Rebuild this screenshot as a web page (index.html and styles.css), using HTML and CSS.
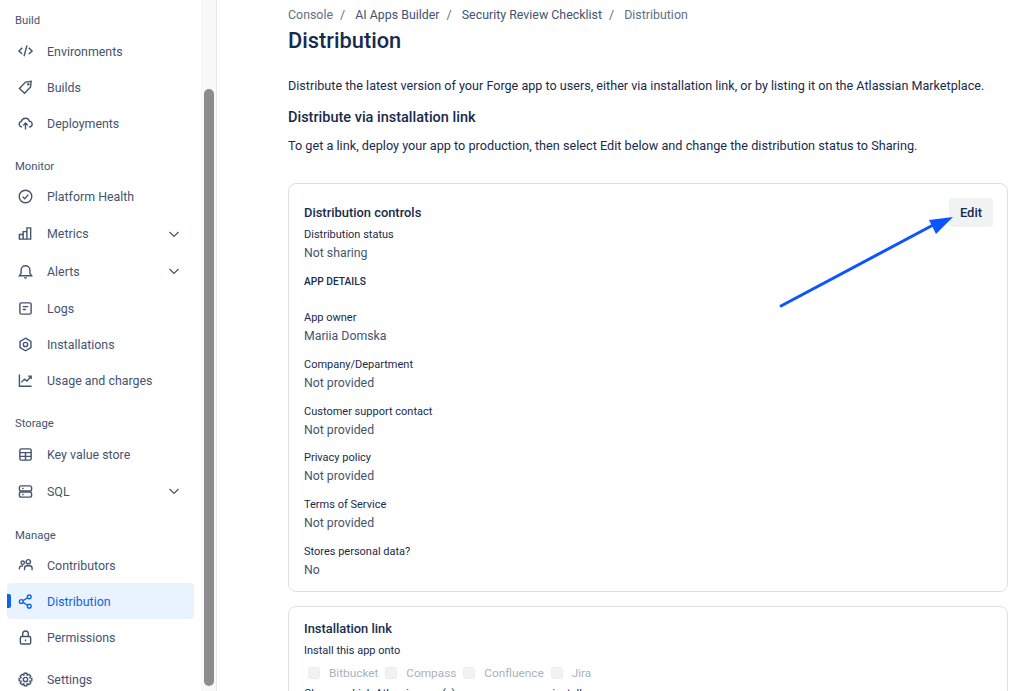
FILE: index.html
```html
<!DOCTYPE html>
<html lang="en">
<head>
    <meta charset="UTF-8">
    <meta name="viewport" content="width=device-width, initial-scale=1.0">
    <title>Distribution</title>
    <link rel="stylesheet" href="styles.css">
</head>
<body>
    <div class="page">

        <!-- Sidebar -->
        <aside class="sidebar">
            <nav class="side-nav">
                <h4 class="nav-label label-build">Build</h4>
                <a class="nav-item">
                    <svg class="nav-icon" viewBox="0 0 16 16"><path d="M4.5 4 1 7.6l3.5 3M11.5 4 15 7.6l-3.5 3M9.6 1.5 6.4 13"/></svg>
                    <span>Environments</span>
                </a>
                <a class="nav-item">
                    <svg class="nav-icon" viewBox="0 0 16 16"><path d="M1.5 9 8 2.2l6-.7-.6 6L7 14.2z"/><circle cx="11" cy="4.6" r=".6"/></svg>
                    <span>Builds</span>
                </a>
                <a class="nav-item">
                    <svg class="nav-icon" viewBox="0 0 16 16"><path d="M4.5 11.6H4A3 3 0 0 1 3.6 5.7 4.5 4.5 0 0 1 12.2 5.6 3 3 0 0 1 12 11.6h-.5M8 14.5V7.5M5.5 10 8 7.5l2.5 2.5"/></svg>
                    <span>Deployments</span>
                </a>

                <h4 class="nav-label label-monitor">Monitor</h4>
                <a class="nav-item item-37">
                    <svg class="nav-icon" viewBox="0 0 16 16"><circle cx="8" cy="8" r="6.7"/><path d="m5 8.2 2.2 2.2L11 6"/></svg>
                    <span>Platform Health</span>
                </a>
                <a class="nav-item item-37">
                    <svg class="nav-icon" viewBox="0 0 16 16"><path d="M1.500 9h4v5h-4zM5.500 6h4v8h-4zM9.500 2h4v12h-4z"/></svg>
                    <span>Metrics</span>
                    <svg class="chevron" viewBox="0 0 12 12"><path d="m1.500 4 4.500 4.500L10.500 4"/></svg>
                </a>
                <a class="nav-item item-38">
                    <svg class="nav-icon" viewBox="0 0 16 16"><path d="M1.500 12.500h13l-1.800-2.500V6.500a4.700 4.700 0 0 0-9.400 0V10zM6.500 14.800h3"/></svg>
                    <span>Alerts</span>
                    <svg class="chevron" viewBox="0 0 12 12"><path d="m1.500 4 4.500 4.500L10.500 4"/></svg>
                </a>
                <a class="nav-item">
                    <svg class="nav-icon" viewBox="0 0 16 16"><rect x="2" y="2" width="12" height="12" rx="1.500"/><path d="M5 6h6M5 9h3.500"/></svg>
                    <span>Logs</span>
                </a>
                <a class="nav-item">
                    <svg class="nav-icon" viewBox="0 0 16 16"><path d="m8 1.300 5.800 3.300v6.800L8 14.700l-5.800-3.300V4.600z"/><circle cx="8" cy="8" r="2.300"/></svg>
                    <span>Installations</span>
                </a>
                <a class="nav-item">
                    <svg class="nav-icon" viewBox="0 0 16 16"><path d="M1.500 1.500v12.700h13M3.500 10l3.500-3.500 2.500 2L14 3.500M10.800 3.300H14v3"/></svg>
                    <span>Usage and charges</span>
                </a>

                <h4 class="nav-label label-storage">Storage</h4>
                <a class="nav-item item-37">
                    <svg class="nav-icon" viewBox="0 0 16 16"><rect x="2" y="2" width="12" height="12" rx="1.500"/><path d="M2 6h12M2 10h12M8 6v8"/></svg>
                    <span>Key value store</span>
                </a>
                <a class="nav-item">
                    <svg class="nav-icon" viewBox="0 0 16 16"><rect x="1.500" y="2" width="13" height="5.500" rx="2"/><rect x="1.500" y="8.500" width="13" height="5.500" rx="2"/><path d="M4.500 4.800h1.500M4.500 11.200h1.500"/></svg>
                    <span>SQL</span>
                    <svg class="chevron" viewBox="0 0 12 12"><path d="m1.500 4 4.500 4.500L10.500 4"/></svg>
                </a>

                <h4 class="nav-label label-manage">Manage</h4>
                <a class="nav-item">
                    <svg class="nav-icon" viewBox="0 0 16 16"><circle cx="5" cy="5" r="1.800"/><circle cx="11" cy="4" r="2.300"/><path d="M1.500 12v-1.500A2.500 2.500 0 0 1 4 8.500h1.500M7 13v-2.500A2.500 2.500 0 0 1 9.500 8.200h3A2.500 2.500 0 0 1 15 10.500V13"/></svg>
                    <span>Contributors</span>
                </a>
                <a class="nav-item is-active">
                    <svg class="nav-icon" viewBox="0 0 16 16"><circle cx="3.500" cy="8" r="2"/><circle cx="12" cy="3" r="2"/><circle cx="12" cy="13" r="2"/><path d="m5.300 7 5-3M5.300 9l5 3"/></svg>
                    <span>Distribution</span>
                </a>
                <a class="nav-item">
                    <svg class="nav-icon" viewBox="0 0 16 16"><rect x="2.500" y="7" width="11" height="8" rx="1.500"/><path d="M5 7V4a3 3 0 0 1 6 0v3M8 10v2"/></svg>
                    <span>Permissions</span>
                </a>
                <a class="nav-item item-settings">
                    <svg class="nav-icon" viewBox="0 0 16 16"><circle cx="8" cy="8" r="2.300"/><path d="M6.600 1.300h2.800l.4 2 1.800-.9 2 2-1 1.700 2.100.5v2.800l-2.100.5 1 1.700-2 2-1.800-.9-.4 2H6.600l-.4-2-1.800.9-2-2 1-1.700-2.100-.5V6.600l2.100-.5-1-1.700 2-2 1.800.9z"/></svg>
                    <span>Settings</span>
                </a>
            </nav>
            <div class="scroll-track">
                <div class="scroll-thumb"></div>
            </div>
        </aside>

        <!-- Main content -->
        <main class="content">
            <div class="breadcrumbs">
                <span class="crumb-end">Console</span><i>/</i>
                <span>AI Apps Builder</span><i>/</i>
                <span>Security Review Checklist</span><i>/</i>
                <span class="crumb-end">Distribution</span>
            </div>
            <h1>Distribution</h1>
            <p class="intro">Distribute the latest version of your Forge app to users, either via installation link, or by listing it on the Atlassian Marketplace.</p>
            <h2>Distribute via installation link</h2>
            <p class="hint">To get a link, deploy your app to production, then select Edit below and change the distribution status to Sharing.</p>

            <section class="card card-controls">
                <div class="card-head">
                    <h3>Distribution controls</h3>
                    <button class="edit-btn">Edit</button>
                </div>
                <div class="field first">
                    <label>Distribution status</label>
                    <p>Not sharing</p>
                </div>
                <h5>APP DETAILS</h5>
                <div class="field owner">
                    <label>App owner</label>
                    <p>Mariia Domska</p>
                </div>
                <div class="field">
                    <label>Company/Department</label>
                    <p>Not provided</p>
                </div>
                <div class="field">
                    <label>Customer support contact</label>
                    <p>Not provided</p>
                </div>
                <div class="field">
                    <label>Privacy policy</label>
                    <p>Not provided</p>
                </div>
                <div class="field">
                    <label>Terms of Service</label>
                    <p>Not provided</p>
                </div>
                <div class="field">
                    <label>Stores personal data?</label>
                    <p>No</p>
                </div>
            </section>

            <section class="card card-link">
                <h3>Installation link</h3>
                <label class="install-label">Install this app onto</label>
                <div class="products">
                    <span class="product"><b></b>Bitbucket</span>
                    <span class="product"><b></b>Compass</span>
                    <span class="product"><b></b>Confluence</span>
                    <span class="product"><b></b>Jira</span>
                </div>
                <p class="choose">Choose which Atlassian app(s) users can use your install</p>
            </section>
        </main>

        <!-- Annotation arrow drawn over the screenshot -->
        <svg class="arrow" viewBox="0 0 1023 691">
            <path d="M780 306.500 935 224" stroke="#0a55ff" stroke-width="3" fill="none"/>
            <path d="M953 217 929 220 936 234z" fill="#0a55ff"/>
        </svg>
    </div>
</body>
</html>
```

FILE: styles.css
```css
/* General Body Styles */
body {
    font-family: Roboto, "Noto Sans", sans-serif;
    background-color: #fff;
    color: #172b4d;
    margin: 0;
}

.page {
    display: flex;
    height: 691px;
    overflow: hidden;
    position: relative;
}

/* Sidebar */
.sidebar {
    width: 216px;
    flex-shrink: 0;
    display: flex;
    border-right: 1px solid #e6e8eb;
    overflow: hidden;
}

.side-nav {
    width: 201px;
    flex-shrink: 0;
    padding-top: 13px;
}

.nav-label {
    margin: 0 0 0 15px;
    height: 14px;
    line-height: 16px;
    font-size: 11.300px;
    font-weight: 400;
    color: #44546f;
}

.label-build {
    margin-bottom: 6px;
}

.label-monitor {
    margin-top: 18px;
    margin-bottom: 5px;
}

.label-storage {
    margin-top: 18px;
    margin-bottom: 6px;
}

.label-manage {
    margin-top: 19px;
    margin-bottom: 5px;
}

.nav-item {
    display: flex;
    align-items: center;
    height: 36px;
    margin-left: 7px;
    width: 187px;
    padding-left: 11px;
    box-sizing: border-box;
    font-size: 12.400px;
    color: #44546f;
    border-radius: 4px;
    position: relative;
}

.item-37 {
    height: 37px;
}

.item-38 {
    height: 38px;
}

.item-settings {
    margin-top: 6px;
}

.nav-icon {
    width: 15px;
    height: 15px;
    margin-right: 14px;
    fill: none;
    stroke: #44546f;
    stroke-width: 1.500;
    flex-shrink: 0;
}

.chevron {
    width: 12px;
    height: 12px;
    position: absolute;
    right: 14px;
    top: 50%;
    margin-top: -6px;
    fill: none;
    stroke: #44546f;
    stroke-width: 1.200;
}

.nav-item.is-active {
    background-color: #e9f2ff;
    color: #0c66e4;
}

.nav-item.is-active .nav-icon {
    stroke: #0c66e4;
}

.nav-item.is-active::before {
    content: "";
    position: absolute;
    left: 0;
    top: 11px;
    width: 4px;
    height: 14px;
    border-radius: 0 2px 2px 0;
    background-color: #0c66e4;
}

.scroll-track {
    flex: 1;
    background-color: #f8f8f9;
    padding: 89px 2px 0 3px;
}

.scroll-thumb {
    height: 597px;
    border-radius: 5px;
    background-color: #8c8c8c;
}

/* Main content */
.content {
    flex: 1;
    padding: 0 15px 0 71px;
    min-width: 0;
}

.breadcrumbs {
    margin-top: 6px;
    height: 18px;
    line-height: 18px;
    font-size: 12.400px;
    color: #44546f;
    white-space: nowrap;
}

.breadcrumbs .crumb-end {
    color: #626f86;
}

.breadcrumbs i {
    font-style: normal;
    color: #626f86;
    margin: 0 7px;
}

h1 {
    margin: 3px 0 0;
    font-size: 21.800px;
    line-height: 28px;
    font-weight: 500;
    color: #172b4d;
}

.intro,
.hint {
    margin: 0;
    font-size: 12.600px;
    line-height: 20px;
    white-space: nowrap;
}

.intro {
    margin-top: 21px;
}

h2 {
    margin: 12px 0 0;
    font-size: 14.500px;
    line-height: 20px;
    font-weight: 500;
}

.hint {
    margin-top: 8px;
    font-size: 12.700px;
}

/* Cards */
.card {
    border: 1px solid #dcdfe4;
    border-radius: 8px;
    box-sizing: border-box;
    padding: 0 14px 0 15px;
}

.card-controls {
    margin-top: 27px;
    height: 409px;
    padding-top: 16px;
}

.card-link {
    margin-top: 14px;
    height: 120px;
    padding-top: 9px;
}

.card-head {
    display: flex;
    justify-content: space-between;
    align-items: flex-start;
    height: 26px;
}

h3 {
    margin: 3px 0 0;
    font-size: 12.900px;
    line-height: 20px;
    font-weight: 500;
}

.edit-btn {
    margin-top: -2px;
    border: none;
    border-radius: 3px;
    background-color: #f1f2f4;
    color: #172b4d;
    font-family: inherit;
    font-size: 13px;
    font-weight: 500;
    width: 44px;
    height: 29px;
    padding: 0;
}

.field {
    margin-top: 9.800px;
}

.field.first {
    margin-top: 0;
}

.field.owner {
    margin-top: 19px;
}

label {
    display: block;
    font-size: 11px;
    line-height: 18px;
    color: #172b4d;
}

.field p {
    margin: -1px 0 0;
    font-size: 12.300px;
    line-height: 20px;
    color: #44546f;
}

h5 {
    margin: 11px 0 0;
    font-size: 10.200px;
    line-height: 16px;
    font-weight: 500;
    color: #172b4d;
}

.install-label {
    margin-top: 3px;
    margin-bottom: -2px;
}

.products {
    display: flex;
    margin-top: 5px;
    padding-left: 4px;
    gap: 7px;
    font-size: 11.800px;
    line-height: 20px;
    color: #a9b1bd;
}

.product {
    display: flex;
    align-items: center;
}

.product b {
    width: 12px;
    height: 12px;
    box-sizing: border-box;
    border-radius: 3px;
    background-color: #f1f2f4;
    border: 1px solid #ebecf0;
    margin-right: 9px;
}

.choose {
    margin: 3px 0 0;
    font-size: 11px;
    line-height: 16px;
}

/* Annotation arrow */
.arrow {
    position: absolute;
    left: 0;
    top: 0;
    width: 1023px;
    height: 691px;
    pointer-events: none;
}
```
